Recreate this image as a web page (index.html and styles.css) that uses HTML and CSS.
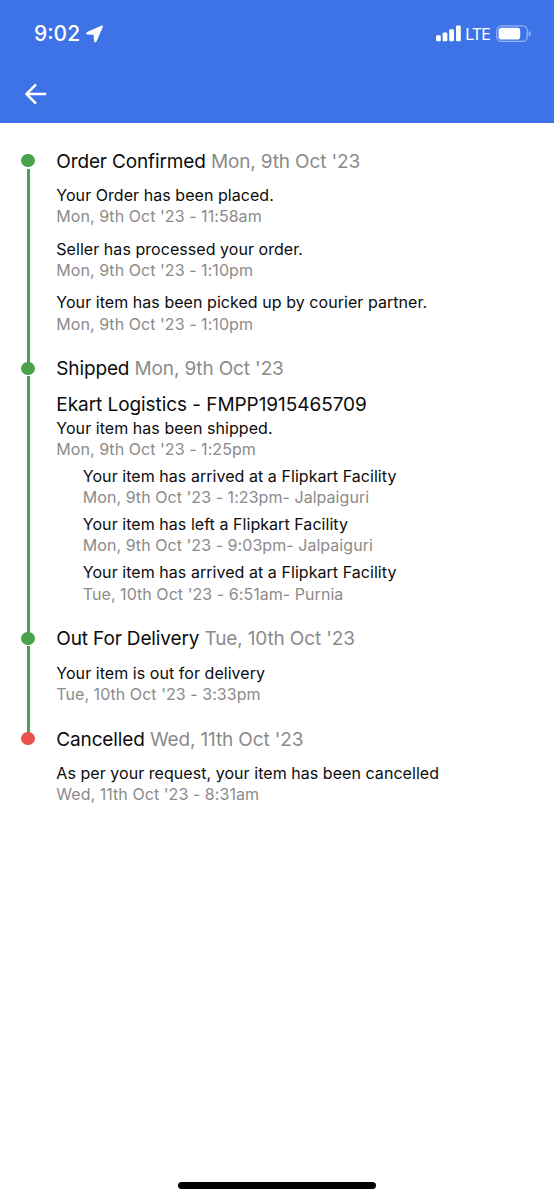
FILE: index.html
```
<!DOCTYPE html>
<html lang="en">

<head>
    <meta charset="UTF-8">
    <meta name="viewport" content="width=device-width, initial-scale=1.0">
    <title>Order Tracking</title>
    <link rel="stylesheet" href="styles.css">
</head>

<body>
    <header>
        <!-- Status bar -->
        <div class="status-bar">
            <span class="time">9:02</span>
            <svg class="location" width="18" height="18" viewBox="0 0 18 18">
                <path d="M15.2.7 1.1 7C-.1 7.6 0 9.3 1.3 9.4L7.6 9.8 8 16C8.1 17.5 9.9 17.7 10.5 16.4L16.7 2.3C17.2 1.1 16.3.2 15.2.7Z" fill="#fff"/>
            </svg>
            <svg class="signal" width="25" height="17" viewBox="0 0 25 17">
                <g fill="#fff">
                    <rect x="0" y="10.3" width="4.8" height="6" rx="1.3"/>
                    <rect x="6.6" y="7.4" width="4.8" height="8.9" rx="1.3"/>
                    <rect x="13.2" y="4.2" width="4.8" height="12.1" rx="1.3"/>
                    <rect x="20" y="0.4" width="4.8" height="15.9" rx="1.3"/>
                </g>
            </svg>
            <span class="network">LTE</span>
            <svg class="battery" width="36" height="18" viewBox="0 0 36 18">
                <rect x=".8" y=".8" width="30.4" height="15.6" rx="4.6" fill="none" stroke="#fff" stroke-opacity=".45" stroke-width="1.3"/>
                <rect x="2.6" y="2.7" width="21.6" height="11.8" rx="2.8" fill="#fff"/>
                <path d="M32.8 6v5.2c1.3-.4 2-1.4 2-2.6s-.7-2.2-2-2.6Z" fill="#fff" fill-opacity=".5"/>
            </svg>
        </div>

        <!-- Back button -->
        <a class="back" href="#" aria-label="Back">
            <svg width="22" height="22" viewBox="0 0 22 22">
                <path d="M21.2 11H1.8M11 1.4 1.6 11l9.4 9.6" fill="none" stroke="#fff" stroke-width="2.5"/>
            </svg>
        </a>
    </header>

    <main class="timeline">
        <section class="step">
            <div class="rail"><span class="dot"></span><span class="line"></span></div>
            <div class="details">
                <h2>Order Confirmed <span>Mon, 9th Oct '23</span></h2>
                <div class="event">
                    <p>Your Order has been placed.</p>
                    <p class="date">Mon, 9th Oct '23 - 11:58am</p>
                </div>
                <div class="event">
                    <p>Seller has processed your order.</p>
                    <p class="date">Mon, 9th Oct '23 - 1:10pm</p>
                </div>
                <div class="event">
                    <p>Your item has been picked up by courier partner.</p>
                    <p class="date">Mon, 9th Oct '23 - 1:10pm</p>
                </div>
            </div>
        </section>

        <section class="step">
            <div class="rail"><span class="dot"></span><span class="line"></span></div>
            <div class="details">
                <h2>Shipped <span>Mon, 9th Oct '23</span></h2>
                <div class="event">
                    <h3>Ekart Logistics - FMPP1915465709</h3>
                    <p>Your item has been shipped.</p>
                    <p class="date">Mon, 9th Oct '23 - 1:25pm</p>
                </div>
                <div class="stops">
                    <div class="stop">
                        <p>Your item has arrived at a Flipkart Facility</p>
                        <p class="date">Mon, 9th Oct '23 - 1:23pm- Jalpaiguri</p>
                    </div>
                    <div class="stop">
                        <p>Your item has left a Flipkart Facility</p>
                        <p class="date">Mon, 9th Oct '23 - 9:03pm- Jalpaiguri</p>
                    </div>
                    <div class="stop">
                        <p>Your item has arrived at a Flipkart Facility</p>
                        <p class="date">Tue, 10th Oct '23 - 6:51am- Purnia</p>
                    </div>
                </div>
            </div>
        </section>

        <section class="step">
            <div class="rail"><span class="dot"></span><span class="line"></span></div>
            <div class="details">
                <h2>Out For Delivery <span>Tue, 10th Oct '23</span></h2>
                <div class="event">
                    <p>Your item is out for delivery</p>
                    <p class="date">Tue, 10th Oct '23 - 3:33pm</p>
                </div>
            </div>
        </section>

        <section class="step">
            <div class="rail"><span class="dot cancelled"></span></div>
            <div class="details">
                <h2>Cancelled <span>Wed, 11th Oct '23</span></h2>
                <div class="event">
                    <p>As per your request, your item has been cancelled</p>
                    <p class="date">Wed, 11th Oct '23 - 8:31am</p>
                </div>
            </div>
        </section>
    </main>

    <div class="home-indicator"></div>
</body>

</html>
```
FILE: styles.css
```
* {
    box-sizing: border-box;
}

body {
    font-family: Inter, sans-serif;
    background: #fff;
    color: #0c0c0c;
    margin: 0;
    height: 1200px;
    display: flex;
    flex-direction: column;
}

header {
    background: #3e73e8; /* Flipkart Blue */
    color: #fff;
    height: 123px;
}

.status-bar {
    display: flex;
    align-items: center;
    height: 67px;
    padding: 0 22px 0 34px;
}

.time {
    font-size: 21px;
    font-weight: 500;
}

.location {
    margin-left: 5.5px;
}

.signal {
    margin-left: auto;
}

.network {
    font-size: 16px;
    letter-spacing: -0.9px;
    margin: 1px 6px 0 4px;
}

.back {
    display: inline-block;
    margin: 16px 0 0 25px;
}

.back svg {
    display: block;
}

.timeline {
    flex: 1;
    padding: 26.6px 20px 0 21px;
}

.step {
    display: flex;
}

/* Dots and connecting line */
.rail {
    width: 14px;
    margin-right: 21.3px;
    padding-top: 4.4px;
    display: flex;
    flex-direction: column;
    align-items: center;
}

.dot {
    width: 13.4px;
    height: 13.4px;
    border-radius: 50%;
    background: #4ba24c;
}

.dot.cancelled {
    background: #eb514b;
}

.line {
    flex: 1;
    width: 3px;
    margin: 1.5px 0 -6px;
    background: #4ba24c;
}

.details {
    flex: 1;
    padding-bottom: 22.2px;
}

h2,
h3 {
    font-size: 19px;
    font-weight: 400;
    line-height: 24px;
    margin: 0;
}

h2 {
    letter-spacing: -0.14px;
    margin-bottom: 11.4px;
}

h3 {
    letter-spacing: -0.06px;
    margin-bottom: 1px;
}

h2 span,
.date {
    color: #8b8b8b;
}

p {
    font-size: 16px;
    line-height: 21.4px;
    letter-spacing: 0.05px;
    margin: 0;
}

.event + .event {
    margin-top: 10.8px;
}

.stops {
    padding-left: 26.5px;
}

.stop {
    margin-top: 5.4px;
}

.home-indicator {
    width: 198px;
    height: 7px;
    margin: 0 auto 11px;
    border-radius: 4px;
    background: #000;
}
```
